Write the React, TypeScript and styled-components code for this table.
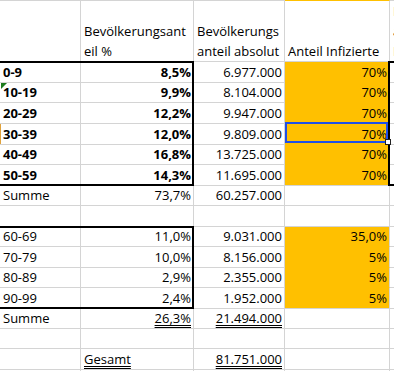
import React from 'react';
import styled, { createGlobalStyle, css } from 'styled-components';

const GRID = '#d4d4d4';
const FILL = '#ffc000';

const GlobalStyle = createGlobalStyle`
  body {
    margin: 0;
    background: #fff;
    font-family: "Open Sans", "Liberation Sans", sans-serif;
    font-size: 13px;
    color: #000;
  }
`;

const Sheet = styled.div`
  display: grid;
  grid-template-columns: 81px 113px 91px 105px 110px;
  grid-template-rows: 1px 61px 21px 20px 21px 21px 20px 21px 20px 21px 20px 21px 20px 21px 20px 20px 21px 20px;
  width: 394px;
  height: 371px;
  overflow: hidden;
`;

type CellProps = {
  $align?: 'left' | 'right';
  $bold?: boolean;
  $fill?: boolean;
  $fillBelow?: boolean;
  $bt?: boolean;
  $br?: boolean;
  $bb?: boolean;
  $mark?: boolean;
};

const Cell = styled.div<CellProps>`
  position: relative;
  box-sizing: border-box;
  display: flex;
  align-items: flex-end;
  justify-content: ${(p) => (p.$align === 'right' ? 'flex-end' : 'flex-start')};
  min-width: 0;
  padding: 0 2px 0 3px;
  border-right: 1px solid ${GRID};
  border-bottom: 1px solid ${(p) => (p.$fill && p.$fillBelow ? FILL : GRID)};
  background: ${(p) => (p.$fill ? FILL : '#fff')};
  font-weight: ${(p) => (p.$bold ? 700 : 400)};
  line-height: 20px;
  white-space: nowrap;
  ${(p) => p.$mark && 'box-shadow: inset 1px 0 0 #e0a23c;'}
  ${(p) =>
    (p.$bt || p.$br || p.$bb) &&
    css`
      &::after {
        content: '';
        position: absolute;
        top: -1px;
        left: -1px;
        right: -1px;
        bottom: -1px;
        z-index: 2;
        pointer-events: none;
        border-top: ${p.$bt ? '2px solid #000' : '0'};
        border-right: ${p.$br ? '2px solid #000' : '0'};
        border-bottom: ${p.$bb ? '2px solid #000' : '0'};
      }
    `}
`;

const Text = styled.span<{ $double?: boolean }>`
  display: block;
  ${(p) =>
    p.$double &&
    css`
      text-decoration-line: underline;
      text-decoration-style: double;
      text-decoration-thickness: 1px;
      text-underline-offset: 2px;
    `}
`;

const Selection = styled.div`
  position: absolute;
  top: -2px;
  left: 0;
  right: 1px;
  bottom: 1px;
  border: 2px solid #1f4fe6;
  z-index: 1;
  pointer-events: none;
`;

const FillHandle = styled.div`
  position: absolute;
  right: -2px;
  bottom: -1px;
  width: 4px;
  height: 4px;
  background: #fff;
  border: 1px solid #222;
  z-index: 3;
`;

const ErrorFlag = styled.span`
  position: absolute;
  top: 0;
  left: 1px;
  width: 0;
  height: 0;
  border-top: 6px solid #1e7b1e;
  border-right: 6px solid transparent;
`;

type Spec = {
  text?: React.ReactNode;
  right?: boolean;
  bold?: boolean;
  fill?: boolean;
  fillBelow?: boolean;
  bt?: boolean;
  br?: boolean;
  bb?: boolean;
  double?: boolean;
  mark?: boolean;
  flag?: boolean;
  selected?: boolean;
};

const youngGroups = [
  ['0-9', '8,5%', '6.977.000'],
  ['10-19', '9,9%', '8.104.000'],
  ['20-29', '12,2%', '9.947.000'],
  ['30-39', '12,0%', '9.809.000'],
  ['40-49', '16,8%', '13.725.000'],
  ['50-59', '14,3%', '11.695.000'],
];

const oldGroups = [
  ['60-69', '11,0%', '9.031.000', '35,0%'],
  ['70-79', '10,0%', '8.156.000', '5%'],
  ['80-89', '2,9%', '2.355.000', '5%'],
  ['90-99', '2,4%', '1.952.000', '5%'],
];

const blank: Spec[] = [{}, {}, {}, {}, {}];

const rows: Spec[][] = [
  [{}, {}, {}, { fill: true, fillBelow: true }, {}],
  [
    {},
    { text: <>Bevölkerungsant<br />eil %</> },
    { text: <>Bevölkerungs<br />anteil absolut</> },
    { text: 'Anteil Infizierte' },
    { text: <>Infizierte<br />absolut<br />Immune</> },
  ],
  ...youngGroups.map(([age, share, abs], i): Spec[] => [
    { text: age, bold: true, bt: i === 0, bb: i === 5, flag: i === 1, mark: i === 3 },
    { text: share, right: true, bold: true, bt: i === 0, br: true, bb: i === 5 },
    { text: abs, right: true },
    { text: '70%', right: true, fill: true, fillBelow: i < 5, br: true, selected: i === 3 },
    { bt: i === 0, bb: i === 5 },
  ]),
  [{ text: 'Summe' }, { text: '73,7%', right: true }, { text: '60.257.000', right: true }, {}, {}],
  blank,
  ...oldGroups.map(([age, share, abs, inf], i): Spec[] => [
    { text: age, bt: i === 0, bb: i === 3 },
    { text: share, right: true, bt: i === 0, br: true, bb: i === 3 },
    { text: abs, right: true },
    { text: inf, right: true, fill: true, fillBelow: i < 3 },
    {},
  ]),
  [
    { text: 'Summe' },
    { text: '26,3%', right: true, double: true },
    { text: '21.494.000', right: true, double: true },
    {},
    {},
  ],
  blank,
  [{}, { text: 'Gesamt', double: true }, { text: '81.751.000', right: true, double: true }, {}, {}],
  blank,
];

const App: React.FC = () => {
  return (
    <>
      <GlobalStyle />
      <Sheet>
        {rows.map((row, r) =>
          row.map((c, k) => (
            <Cell
              key={`${r}-${k}`}
              $align={c.right ? 'right' : 'left'}
              $bold={c.bold}
              $fill={c.fill}
              $fillBelow={c.fillBelow}
              $bt={c.bt}
              $br={c.br}
              $bb={c.bb}
              $mark={c.mark}
            >
              {c.flag && <ErrorFlag />}
              {c.text !== undefined && <Text $double={c.double}>{c.text}</Text>}
              {c.selected && (
                <>
                  <Selection />
                  <FillHandle />
                </>
              )}
            </Cell>
          ))
        )}
      </Sheet>
    </>
  );
};

export default App;
